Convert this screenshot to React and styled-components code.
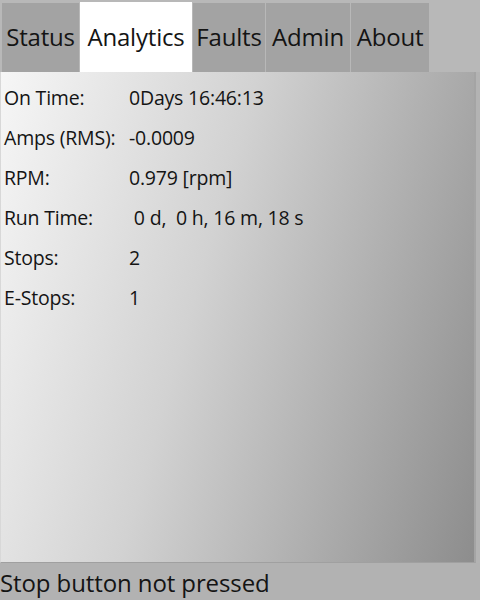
import React from "react";
import styled, { createGlobalStyle } from "styled-components";

const Global = createGlobalStyle`
  html, body { margin: 0; padding: 0; }
  body {
    width: 480px;
    height: 600px;
    overflow: hidden;
    background: #b3b3b3;
    font-family: "Open Sans", "Noto Sans", sans-serif;
    color: #111;
  }
`;

const Screen = styled.div`
  width: 480px;
  height: 600px;
  display: flex;
  flex-direction: column;
  background: #b3b3b3;
`;

const TabBar = styled.div`
  display: flex;
  align-items: flex-end;
  gap: 1px;
  padding: 2px 0 0 2px;
  height: 70px;
  background: #b8b8b8;
`;

const Tab = styled.div`
  width: ${(p) => p.$w}px;
  height: ${(p) => (p.$active ? 70 : 69)}px;
  box-sizing: border-box;
  display: flex;
  align-items: center;
  justify-content: center;
  font-size: 24px;
  letter-spacing: -0.2px;
  background: ${(p) => (p.$active ? "#ffffff" : "#a3a3a3")};
  color: #141414;
  padding-bottom: 2px;
  white-space: nowrap;
`;

const Panel = styled.div`
  flex: 1;
  width: 476px;
  box-sizing: border-box;
  border-left: 1px solid #d8d8d8;
  border-right: 2px solid #a4a4a4;
  border-bottom: 1px solid #a0a0a0;
  background: linear-gradient(106deg, #f6f6f6 0%, #d2d2d2 42%, #8d8d8d 100%);
  padding: 9px 0 0 3px;
  display: flex;
  flex-direction: column;
`;

const Row = styled.div`
  display: grid;
  grid-template-columns: 125px 1fr;
  height: 40px;
  font-size: 19.5px;
  line-height: 34px;
  letter-spacing: -0.2px;
  color: #141414;
`;

const Label = styled.span`
  white-space: nowrap;
`;
const Value = styled.span`
  white-space: pre;
`;

const StatusBar = styled.div`
  height: 37px;
  display: flex;
  align-items: center;
  font-size: 24px;
  letter-spacing: -0.1px;
  color: #141414;
  background: #b2b2b2;
  padding-top: 2px;
  box-sizing: border-box;
`;

const tabs = [
  { name: "Status", w: 77 },
  { name: "Analytics", w: 112 },
  { name: "Faults", w: 72 },
  { name: "Admin", w: 84 },
  { name: "About", w: 78 },
];

const rows = [
  ["On Time:", "0Days 16:46:13"],
  ["Amps (RMS):", "-0.0009"],
  ["RPM:", "0.979 [rpm]"],
  ["Run Time:", " 0 d,  0 h, 16 m, 18 s"],
  ["Stops:", "2"],
  ["E-Stops:", "1"],
];

export default function App() {
  return (
    <Screen>
      <Global />
      <TabBar>
        {tabs.map((t) => (
          <Tab key={t.name} $w={t.w} $active={t.name === "Analytics"}>
            {t.name}
          </Tab>
        ))}
      </TabBar>
      <Panel>
        {rows.map(([l, v]) => (
          <Row key={l}>
            <Label>{l}</Label>
            <Value>{v}</Value>
          </Row>
        ))}
      </Panel>
      <StatusBar>Stop button not pressed</StatusBar>
    </Screen>
  );
}
